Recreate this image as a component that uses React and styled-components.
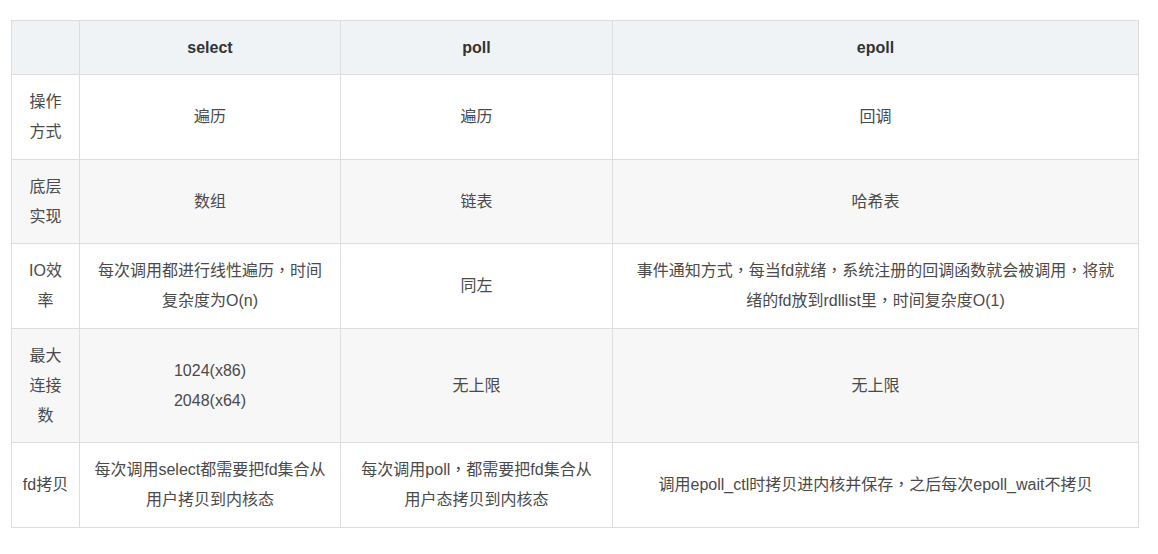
import React from "react";
import styled, { createGlobalStyle } from "styled-components";

const Global = createGlobalStyle`
  html, body { margin: 0; padding: 0; background: #ffffff; }
  body { font-family: "Liberation Sans", "Noto Sans CJK SC", sans-serif; }
`;

const Page = styled.div`
  padding: 20px 0 0 11px;
`;

const Table = styled.table`
  width: 1127px;
  border-collapse: collapse;
  table-layout: fixed;
  font-size: 16px;
  line-height: 30px;
  color: #4a4a4a;
`;

const Row = styled.tr`
  background: ${(p) => (p.$shade ? "#f7f7f7" : "#ffffff")};
`;

const HeadRow = styled.tr`
  background: #eff3f6;
`;

const SIDES = ["10px", "12px", "15px", "20px"];

const HeadCell = styled.th`
  border: 1px solid #dddddd;
  padding: 12px ${(p) => SIDES[p.$col]} 11px;
  font-weight: 700;
  color: #333333;
  text-align: center;
`;

const Cell = styled.td`
  border: 1px solid #dddddd;
  padding: 12px ${(p) => SIDES[p.$col]} 11.5px;
  text-align: center;
  vertical-align: middle;
  word-break: break-all;
`;

const Punct = styled.span`
  font-family: "Noto Sans CJK TC", "Noto Sans CJK SC", sans-serif;
  line-height: 1;
`;

const rows = [
  ["操作方式", "遍历", "遍历", "回调"],
  ["底层实现", "数组", "链表", "哈希表"],
  [
    "IO效率",
    "每次调用都进行线性遍历，时间复杂度为O(n)",
    "同左",
    "事件通知方式，每当fd就绪，系统注册的回调函数就会被调用，将就绪的fd放到rdllist里，时间复杂度O(1)",
  ],
  ["最大连接数", ["1024(x86)", "2048(x64)"], "无上限", "无上限"],
  [
    "fd拷贝",
    "每次调用select都需要把fd集合从用户拷贝到内核态",
    "每次调用poll，都需要把fd集合从用户态拷贝到内核态",
    "调用epoll_ctl时拷贝进内核并保存，之后每次epoll_wait不拷贝",
  ],
];

const renderText = (text) =>
  text.split("，").map((part, i) => (
    <React.Fragment key={i}>
      {i > 0 && <Punct>，</Punct>}
      {part}
    </React.Fragment>
  ));

const renderContent = (c) =>
  Array.isArray(c)
    ? c.map((line, i) => (
        <React.Fragment key={i}>
          {i > 0 && <br />}
          {renderText(line)}
        </React.Fragment>
      ))
    : renderText(c);

export default function App() {
  return (
    <>
      <Global />
      <Page>
        <Table>
          <colgroup>
            <col style={{ width: 68 }} />
            <col style={{ width: 261 }} />
            <col style={{ width: 272 }} />
            <col style={{ width: 526 }} />
          </colgroup>
          <thead>
            <HeadRow>
              <HeadCell $col={0}></HeadCell>
              <HeadCell $col={1}>select</HeadCell>
              <HeadCell $col={2}>poll</HeadCell>
              <HeadCell $col={3}>epoll</HeadCell>
            </HeadRow>
          </thead>
          <tbody>
            {rows.map((r, i) => (
              <Row key={i} $shade={i % 2 === 1}>
                {r.map((c, j) => (
                  <Cell key={j} $col={j}>
                    {renderContent(c)}
                  </Cell>
                ))}
              </Row>
            ))}
          </tbody>
        </Table>
      </Page>
    </>
  );
}
